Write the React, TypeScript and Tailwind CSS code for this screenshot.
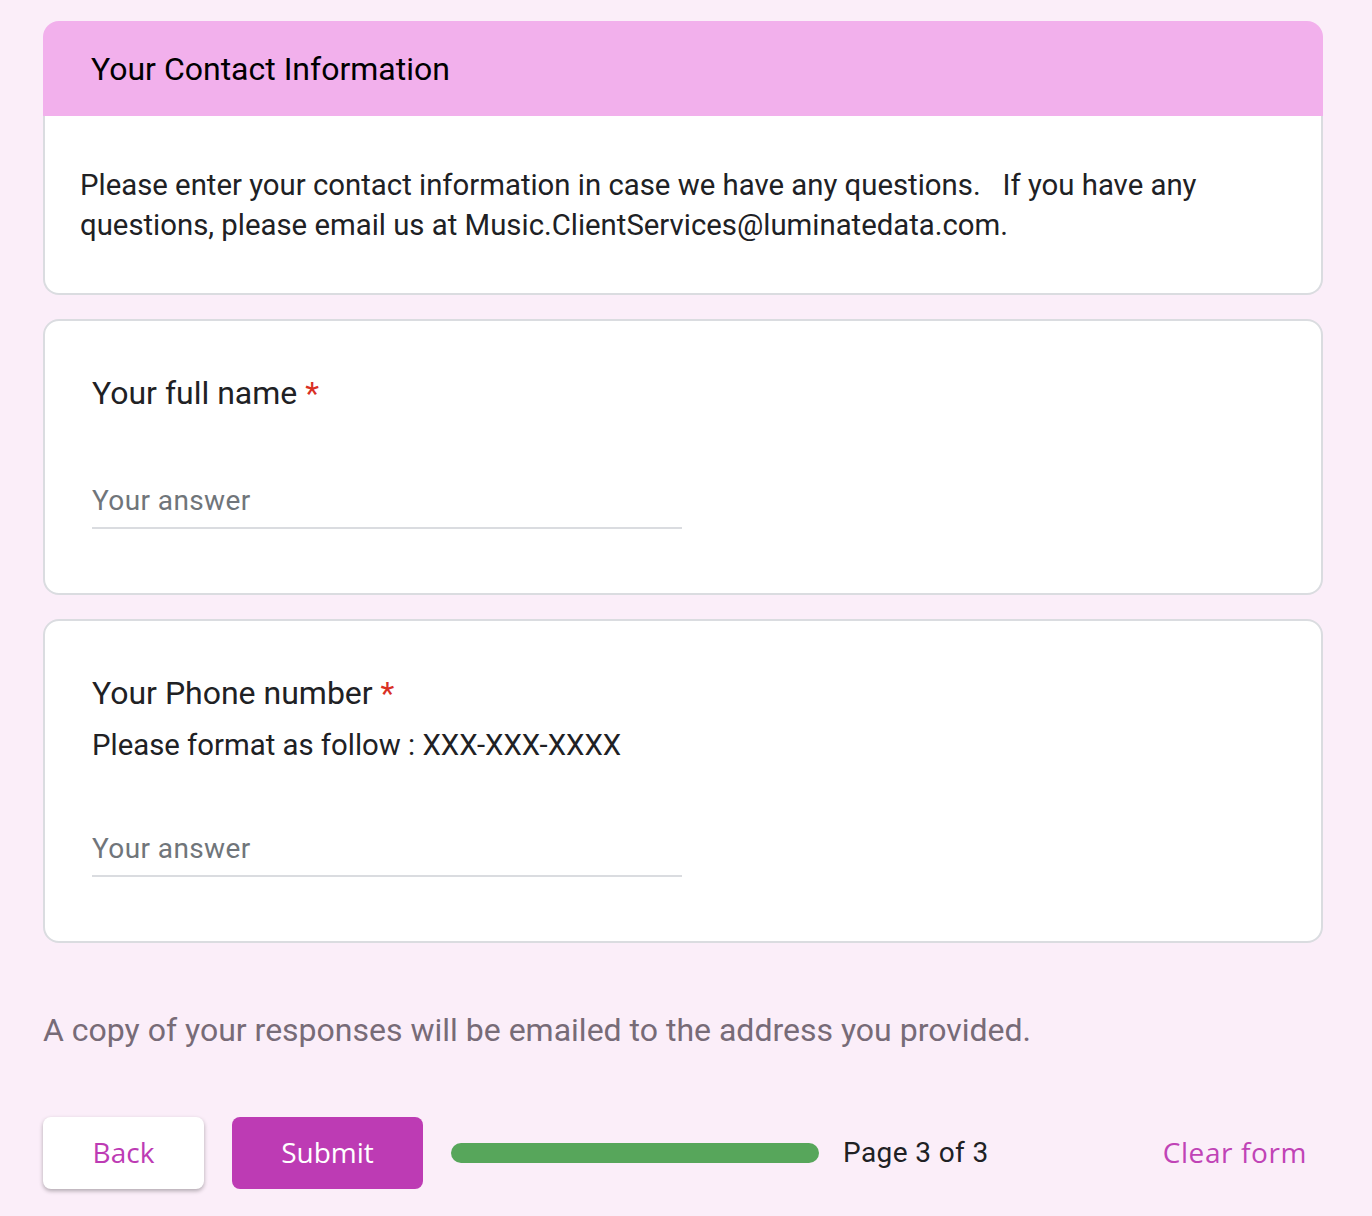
const roboto = { fontFamily: "Roboto, 'Liberation Sans', sans-serif" };
const gsans = { fontFamily: "'Open Sans', Roboto, sans-serif" };

function Answer() {
  return (
    <div className="w-[590px] border-b-2 border-[#dadce0] pb-[6px]">
      <span className="block text-[28px] leading-[40px] tracking-[0.4px] text-[#70757a]">Your answer</span>
    </div>
  );
}

function Question({ title, hint }: { title: string; hint?: string }) {
  return (
    <div className="rounded-[16px] border-2 border-[#dadce0] bg-white px-[47px] pt-[48px] pb-[64px]">
      <div className="text-[32px] leading-[48px] text-[#202124]">
        {title} <span className="text-[#d93025]">*</span>
      </div>
      {hint ? (
        <div className="mt-[8px] text-[29.33px] leading-[40px] text-[#202124]">{hint}</div>
      ) : null}
      <div className="mt-[64px]">
        <Answer />
      </div>
    </div>
  );
}

export default function App() {
  return (
    <div className="min-h-screen bg-[#fbeef9]" style={roboto}>
      <div className="ml-[43px] w-[1280px] pt-[21px] pb-[27px]">
        <div className="rounded-[16px]">
          <div className="flex h-[95px] items-center rounded-t-[16px] bg-[#f2b0ec] pl-[48px]">
            <h1 className="text-[32px] leading-[48px] text-black">Your Contact Information</h1>
          </div>
          <div className="rounded-b-[16px] border-2 border-t-0 border-[#dadce0] bg-white pl-[35px] pr-[34px] pt-[49px] pb-[48px]">
            <p className="text-[29.33px] leading-[40px] text-[#202124]">
              Please enter your contact information in case we have any questions.{"\u00a0\u00a0 "}If you have any
              questions, please email us at Music.ClientServices@luminatedata.com.
            </p>
          </div>
        </div>

        <div className="mt-[24px]">
          <Question title="Your full name" />
        </div>
        <div className="mt-[24px]">
          <Question title="Your Phone number" hint="Please format as follow : XXX-XXX-XXXX" />
        </div>

        <p className="mt-[67px] text-[32px] leading-[40px] text-[#776b77]">
          A copy of your responses will be emailed to the address you provided.
        </p>

        <div className="mt-[67px] flex items-center">
          <button
            type="button"
            className="flex h-[72px] w-[161px] items-center justify-center rounded-[8px] bg-white pb-[3px] text-[28px] font-medium text-[#bd3bb4] shadow-[0_2px_4px_rgba(0,0,0,0.3)]"
            style={gsans}
          >
            Back
          </button>
          <button
            type="button"
            className="ml-[28px] flex h-[72px] w-[191px] items-center justify-center rounded-[8px] bg-[#bd3bb4] pb-[3px] text-[28px] font-medium text-white"
            style={gsans}
          >
            Submit
          </button>
          <div className="ml-[28px] h-[20px] w-[368px] rounded-full bg-[#57a65b]" />
          <span className="ml-[24px] text-[28px] leading-[40px] tracking-[0.4px] text-[#202124]">Page 3 of 3</span>
          <button
            type="button"
            className="ml-auto mr-[16px] pb-[3px] text-[28px] font-medium tracking-[0.6px] text-[#c043b6]"
            style={gsans}
          >
            Clear form
          </button>
        </div>
      </div>
    </div>
  );
}
